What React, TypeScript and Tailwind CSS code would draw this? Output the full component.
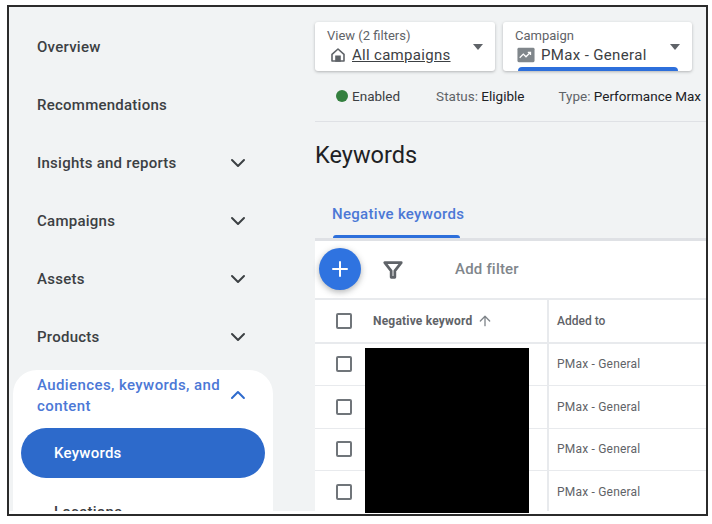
import { ChevronDown, ChevronUp, ArrowUp, Plus } from "lucide-react";

const navItems = [
  { label: "Overview" },
  { label: "Recommendations" },
  { label: "Insights and reports", expandable: true },
  { label: "Campaigns", expandable: true },
  { label: "Assets", expandable: true },
  { label: "Products", expandable: true },
];

function Checkbox() {
  return <div className="h-4 w-4 shrink-0 rounded-[2px] border-2 border-[#70757a] bg-white" />;
}

function Caret() {
  return <div className="h-0 w-0 border-x-[5px] border-t-[6px] border-x-transparent border-t-[#5f6368]" />;
}

function Row() {
  return (
    <div className="flex h-[42.5px] shrink-0 border-b border-[#e8eaed]">
      <div className="flex w-[234px] items-center border-r-2 border-[#e8eaed] pl-[21px]">
        <Checkbox />
      </div>
      <div className="flex items-center pl-[8px] text-xs tracking-[0.2px] text-[#5f6368]">PMax - General</div>
    </div>
  );
}

export default function App() {
  return (
    <div className="h-[524px] w-[712px] overflow-hidden bg-white pl-[7px] pt-[5px] font-['Roboto',sans-serif]">
      <div className="h-[511px] w-[701px] overflow-hidden border-2 border-[#2b2b2b] bg-white">
        <div className="flex h-[504px] bg-[#f1f3f4]">
          <aside className="flex w-[305px] shrink-0 flex-col pt-[11px]">
            {navItems.map((item) => (
              <div key={item.label} className="flex h-[58px] items-center justify-between pl-[28px] pr-[64px] text-[15px] font-medium tracking-[0.25px] text-[#3c4043]">
                <span>{item.label}</span>
                {item.expandable && <ChevronDown className="h-6 w-6 text-[#3c4043]" />}
              </div>
            ))}
            <div className="ml-1 mt-[4px] w-[260px] flex-1 overflow-hidden rounded-t-[24px] bg-white px-2">
              <div className="flex h-[58px] items-center justify-between pb-[6px] pl-4 pr-[15px] text-[15px] font-medium leading-[21px] tracking-[0.4px] text-[#4c78d6]">
                <span className="w-[190px]">Audiences, keywords, and content</span>
                <ChevronUp className="mb-[2px] h-6 w-6 text-[#2f6bcd]" />
              </div>
              <div className="flex h-[50px] items-center rounded-[25px] bg-[#2d6acb] pl-[33px] text-[15px] font-medium tracking-[0.25px] text-white">Keywords</div>
              <div className="pl-[33px] pt-[23px] text-[15px] font-medium tracking-[0.25px] text-[#3c4043]">Locations</div>
            </div>
          </aside>
          <main className="flex min-w-0 flex-1 flex-col pl-[1px] pt-[15px]">
            <div className="flex gap-2">
              <div className="flex h-[49px] w-[180px] justify-between rounded-[3px] bg-white pl-3 pr-3 pt-[6px] shadow-[0_1px_3px_rgba(60,64,67,0.35)]">
                <div>
                  <div className="text-[13px] leading-[16px] text-[#5f6368]">View (2 filters)</div>
                  <div className="ml-[3px] flex items-center gap-[6px] text-[15px] tracking-[0.3px] text-[#3c4043]">
                    <svg viewBox="0 0 24 24" className="h-4 w-4" fill="none" stroke="#5f6368" strokeWidth="2.4">
                      <path d="M3 11 12 3l9 8v10H3z" strokeLinejoin="round" />
                      <path d="M9 21v-7h6v7z" fill="#5f6368" />
                    </svg>
                    <span className="underline">All campaigns</span>
                  </div>
                </div>
                <div className="pt-[16px]">
                  <Caret />
                </div>
              </div>
              <div className="relative flex h-[49px] w-[189px] justify-between overflow-hidden rounded-[3px] bg-white pl-3 pr-3 pt-[6px] shadow-[0_1px_3px_rgba(60,64,67,0.35)]">
                <div>
                  <div className="text-[13px] leading-[16px] text-[#5f6368]">Campaign</div>
                  <div className="ml-[2px] flex items-center gap-[6px] text-[15px] tracking-[0.35px] text-[#3c4043]">
                    <svg viewBox="0 0 20 20" className="h-[18px] w-[18px]">
                      <rect x="0.5" y="2" width="19" height="16" rx="1.5" fill="#80868b" />
                      <path d="M3 13l4-4 3 3 5-5M12 7h3v3" fill="none" stroke="#fff" strokeWidth="1.4" />
                    </svg>
                    <span>PMax - General</span>
                  </div>
                </div>
                <div className="pt-[16px]">
                  <Caret />
                </div>
                <div className="absolute bottom-0 left-[15px] h-1 w-[160px] rounded-t-[4px] bg-[#2d6fdb]" />
              </div>
            </div>
            <div className="flex h-[51px] shrink-0 items-center border-b border-[#dfe1e5] pl-[21px] text-[13.5px] text-[#5f6368]">
              <span className="h-3 w-3 rounded-full bg-[#34803f]" />
              <span className="ml-1 text-[#3c4043]">Enabled</span>
              <span className="ml-9">Status: <span className="text-[#202124]">Eligible</span></span>
              <span className="ml-[34px] whitespace-nowrap">Type: <span className="text-[#202124]">Performance Max</span></span>
            </div>
            <h1 className="mt-[18px] text-[23.5px] leading-[30px] text-[#202124]">Keywords</h1>
            <div className="mt-[34px] h-[24px] shrink-0 pl-[17px] text-[15px] font-medium leading-[20px] tracking-[0.3px] text-[#4c78d6]">Negative keywords</div>
            <div className="ml-[18px] mt-[7px] h-[3px] w-[127px] shrink-0 rounded-t-[3px] bg-[#2d6fdb]" />
            <div className="h-[3px] shrink-0 bg-[#dfe1e5]" />
            <div className="relative min-h-0 flex-1 bg-white">
              <div className="flex h-full flex-col overflow-hidden">
                <div className="flex h-[59px] shrink-0 items-center border-b-2 border-[#e8eaed] text-[15px] font-medium tracking-[0.2px] text-[#80868b]">
                  <svg viewBox="0 0 24 24" className="ml-[67px] h-[22px] w-[22px]" fill="none" stroke="#5f6368" strokeWidth="3">
                    <path d="M3 4h18l-7 9v7h-4v-7z" strokeLinejoin="round" />
                  </svg>
                  <span className="ml-[51px]">Add filter</span>
                </div>
                <div className="flex h-[43.5px] shrink-0 border-b-2 border-[#e8eaed]">
                  <div className="flex w-[234px] items-center border-r-2 border-[#e8eaed] pl-[21px]">
                    <Checkbox />
                    <span className="ml-[21px] text-xs font-bold tracking-[0.2px] text-[#5f6368]">Negative keyword</span>
                    <ArrowUp className="ml-1 h-4 w-4 text-[#80868b]" />
                  </div>
                  <div className="flex items-center pl-[8px] text-xs font-medium text-[#5f6368]">Added to</div>
                </div>
                <Row />
                <Row />
                <Row />
                <Row />
              </div>
              <div className="absolute left-[4px] top-[7px] flex h-[42px] w-[42px] items-center justify-center rounded-full bg-[#2f73e0] shadow-[0_2px_6px_rgba(60,64,67,0.4)]">
                <Plus className="h-6 w-6 text-white" />
              </div>
              <div className="absolute left-[50px] top-[107px] h-[165px] w-[164px] bg-black" />
            </div>
          </main>
        </div>
      </div>
    </div>
  );
}
